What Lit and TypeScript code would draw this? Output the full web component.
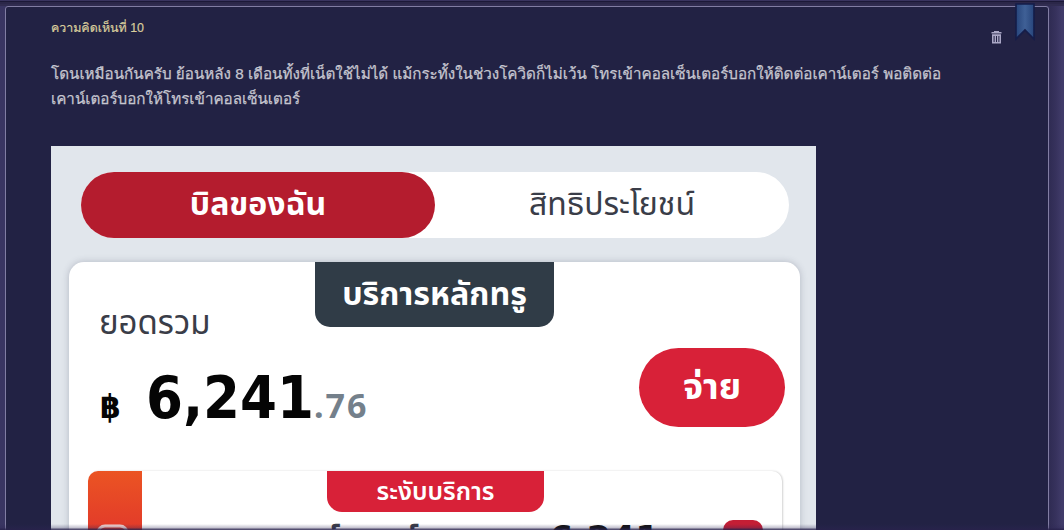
import {LitElement, html, css} from 'lit';
import {customElement, property} from 'lit/decorators.js';

@customElement('bill-preview')
export class BillPreview extends LitElement {
  @property() baht = '6,241';
  @property() satang = '.76';

  static styles = css`
    :host {
      display: block;
      box-sizing: border-box;
      width: 765px;
      height: 385px;
      padding: 26px 16px 0 18px;
      overflow: hidden;
      background: #e1e6ec;
      color: #3a3d48;
      font-family: 'Noto Sans Thai', 'Noto Sans', sans-serif;
      white-space: nowrap;
    }
    .tabs {
      display: flex;
      height: 66px;
      width: 708px;
      margin-left: 12px;
      border-radius: 33px;
      background: #fff;
    }
    .tab {
      flex: 1;
      display: flex;
      align-items: center;
      justify-content: center;
      border-radius: 33px;
      font-size: 32px;
    }
    .tab.active {
      background: #b41c2e;
      color: #fff;
      font-weight: 700;
    }
    .card {
      display: flex;
      flex-direction: column;
      box-sizing: border-box;
      height: 320px;
      margin-top: 24px;
      border-radius: 15px 15px 0 0;
      background: #fff;
      box-shadow: 0 0 7px rgba(60, 65, 90, 0.28);
    }
    .ribbon {
      display: flex;
      align-items: center;
      justify-content: center;
      color: #fff;
      font-weight: 700;
    }
    .main {
      width: 239px;
      height: 65px;
      margin-left: 246px;
      border-radius: 0 0 15px 15px;
      background: #303c47;
      font-size: 32.2px;
    }
    .summary {
      display: flex;
      justify-content: space-between;
      height: 144px;
      padding: 0 15px 0 30px;
    }
    .label {
      margin-top: -26px;
      font-size: 33px;
      line-height: 46px;
    }
    .amount {
      display: flex;
      align-items: baseline;
      height: 80px;
      margin-top: 11px;
      line-height: 80px;
      color: #050505;
      font-family: 'DejaVu Sans Condensed', 'DejaVu Sans', sans-serif;
      font-weight: 700;
    }
    .sign {
      width: 46px;
      padding-left: 1px;
      font-size: 33px;
    }
    .baht {
      font-size: 59px;
    }
    .satang {
      color: #74808b;
      font: 700 34px/80px 'Noto Sans', sans-serif;
      letter-spacing: 2px;
    }
    .pay {
      display: flex;
      align-items: center;
      justify-content: center;
      width: 146px;
      height: 79px;
      margin-top: 21px;
      border-radius: 40px;
      background: #d82138;
      color: #fff;
      font-size: 36px;
      font-weight: 700;
    }
    .service {
      display: grid;
      grid-template-columns: 54px 185px 217px 179px 59px;
      width: 694px;
      height: 100px;
      margin-left: 19px;
      border-radius: 10px 10px 0 0;
      box-shadow: 1px 0 2px rgba(0, 0, 0, 0.18);
    }
    .brand {
      padding: 53px 0 0 8px;
      border-radius: 10px 0 0 0;
      background: linear-gradient(#eb5423, #e23a2a 60px);
    }
    .brand svg {
      display: block;
    }
    .suspend {
      height: 41px;
      border-radius: 0 0 15px 15px;
      background: #d82138;
      font-size: 25px;
      font-weight: 600;
    }
    .name {
      display: flex;
      padding-top: 5px;
      margin-left: -3px;
      font-size: 31px;
      line-height: 46px;
      font-weight: 700;
    }
    .name span {
      width: 75px;
    }
    .due {
      padding: 51px 0 0 5px;
      color: #111;
      font: 700 35px/34px 'DejaVu Sans', sans-serif;
    }
    .check {
      width: 40px;
      height: 40px;
      margin-top: 49px;
      border-radius: 10px;
      background: #c41e35;
    }
  `

  render() {
    return html`
      <div class="tabs">
        <div class="tab active">บิลของฉัน</div>
        <div class="tab">สิทธิประโยชน์</div>
      </div>
      <div class="card">
        <div class="ribbon main">บริการหลักทรู</div>
        <div class="summary">
          <div>
            <div class="label">ยอดรวม</div>
            <div class="amount">
              <span class="sign">฿</span><span class="baht">${this.baht}</span><span class="satang">${this.satang}</span>
            </div>
          </div>
          <div class="pay">จ่าย</div>
        </div>
        <div class="service">
          <div class="brand">
            <svg width="34" height="30" viewBox="0 0 34 30" fill="none" stroke="#f6d5d0" stroke-width="3">
              <rect x="2" y="2" width="29" height="30" rx="7" />
            </svg>
          </div>
          <div></div>
          <div>
            <div class="ribbon suspend">ระงับบริการ</div>
            <div class="name"><span>ร์</span><span>น์</span></div>
          </div>
          <div class="due">${this.baht}</div>
          <div class="check"></div>
        </div>
      </div>
    `;
  }
}

@customElement('app-root')
export class AppRoot extends LitElement {
  static styles = css`
    :host {
      display: block;
      position: relative;
      box-sizing: border-box;
      height: 530px;
      padding: 6px 15px 0 5px;
      overflow: hidden;
      background: linear-gradient(90deg, #393562 0 1048px, #302c54 1050px, #37325d 1056px, #403b69 1062px);
      font-family: 'Liberation Sans', Loma, Garuda, 'Noto Sans Thai Looped', 'Noto Sans Thai', sans-serif;
    }
    .topline {
      position: absolute;
      inset: 0 0 auto 0;
      height: 6px;
      background: linear-gradient(#39345f 0 1px, #1c1938 1px 2px, #2b2749 2px 4px, #302c50 4px);
    }
    .comment {
      position: relative;
      box-sizing: border-box;
      height: 540px;
      padding: 10px 45px 0 45px;
      border: 1px solid #817da3;
      border-radius: 3px;
      background: #222244;
    }
    .number {
      height: 22px;
      color: #d9cd9c;
      font-size: 12.4px;
      line-height: 22px;
      -webkit-text-stroke: 0.2px #d9cd9c;
    }
    .text {
      height: 50px;
      margin: 22px 0 35px;
      color: #c6c6d0;
      font-size: 15.19px;
      line-height: 25px;
      white-space: nowrap;
      -webkit-text-stroke: 0.25px #c6c6d0;
    }
    .trash {
      position: absolute;
      left: 985px;
      top: 24px;
    }
    .ribbon {
      position: absolute;
      left: 1009px;
      top: -4px;
    }
    .shade {
      position: absolute;
      inset: auto 0 0 0;
      height: 6px;
      background: linear-gradient(rgba(45, 38, 85, 0), rgba(45, 38, 85, 0.3) 4px, rgba(40, 34, 76, 0.8) 5px);
    }
  `

  render() {
    return html`
      <div class="topline"></div>
      <div class="comment">
        <div class="number">ความคิดเห็นที่ 10</div>
        <div class="text">
          โดนเหมือนกันครับ ย้อนหลัง 8 เดือนทั้งที่เน็ตใช้ไม่ได้ แม้กระทั้งในช่วงโควิดก็ไม่เว้น โทรเข้าคอลเซ็นเตอร์บอกให้ติดต่อเคาน์เตอร์ พอติดต่อ<br>เคาน์เตอร์บอกให้โทรเข้าคอลเซ็นเตอร์
        </div>
        <bill-preview></bill-preview>
        <svg class="trash" width="11" height="13" viewBox="0 0 11 13">
          <path fill="#aaa7c6" fill-rule="evenodd" d="M3 0h5v1h2.5v1.5H.5V1H3zM1 3.2h9V12.5H1zM2.6 5v6h1V5zM5 5v6h1V5zM7.4 5v6h1V5z" />
        </svg>
        <svg class="ribbon" width="20" height="38" viewBox="0 0 20 38">
          <defs>
            <linearGradient id="cloth">
              <stop offset="0" stop-color="#27457b" />
              <stop offset="0.5" stop-color="#3f6096" />
              <stop offset="1" stop-color="#27457b" />
            </linearGradient>
          </defs>
          <path fill="url(#cloth)" stroke="#151d49" stroke-width="1.6" d="M1 1h18v35L10 27 1 36z" />
        </svg>
      </div>
      <div class="shade"></div>
    `;
  }
}
